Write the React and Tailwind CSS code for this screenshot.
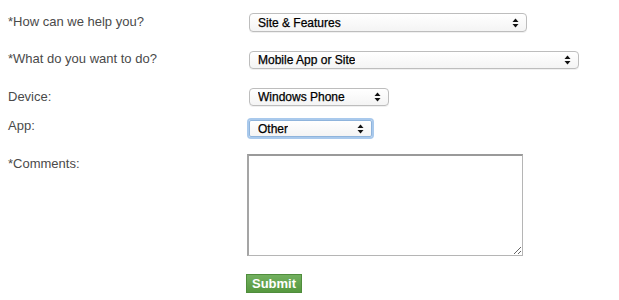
import { useState } from 'react';

const rows = [
  { label: '*How can we help you?', value: 'Site & Features', width: 'w-[278px]', height: 'h-[19px]', labelTop: 'mt-px', rowTop: 'mt-[13px]' },
  { label: '*What do you want to do?', value: 'Mobile App or Site', width: 'w-[330px]', height: 'h-[18px]', labelTop: 'mt-0', rowTop: 'mt-[19px]' },
  { label: 'Device:', value: 'Windows Phone', width: 'w-[140px]', height: 'h-[18px]', labelTop: 'mt-px', rowTop: 'mt-[19px]' },
  { label: 'App:', value: 'Other', width: 'w-[123px]', height: 'h-[17px]', labelTop: '-mt-[2px]', rowTop: 'mt-[14px]', focused: true },
];

function Arrows() {
  return (
    <svg width="7" height="10" viewBox="0 0 7 10" className="shrink-0">
      <path d="M3.5 0.5 L6.5 4 L0.5 4 Z" fill="#111" />
      <path d="M0.5 6 L6.5 6 L3.5 9.5 Z" fill="#111" />
    </svg>
  );
}

function MacSelect({ value, width, height, focused }) {
  return (
    <div
      className={`${width} ${height} flex items-center justify-between pl-[8px] pr-[7px] bg-gradient-to-b from-white to-[#f4f4f4] text-[12px] leading-none text-black [-webkit-text-stroke:0.25px_#000] ${
        focused
          ? 'rounded-[2px] border border-[#8fb4dc] shadow-[0_0_0_2px_#a9c9ec]'
          : 'rounded-[4px] border border-[#bdbdbd] shadow-[0_1px_0_rgba(0,0,0,0.06)]'
      }`}
      style={{ fontFamily: '"Liberation Sans", Arial, sans-serif' }}
    >
      <span className="truncate">{value}</span>
      <Arrows />
    </div>
  );
}

export default function App() {
  const [comments, setComments] = useState('');

  return (
    <div
      className="w-[619px] h-[300px] bg-white overflow-hidden pl-[8px]"
      style={{ fontFamily: '"Liberation Sans", Arial, sans-serif' }}
    >
      {rows.map((row) => (
        <div key={row.label} className={`flex items-start ${row.rowTop}`}>
          <label className={`w-[241px] shrink-0 text-[13px] leading-[16px] text-[#4a4a4a] ${row.labelTop}`}>
            {row.label}
          </label>
          <MacSelect {...row} />
        </div>
      ))}

      {/* Comments */}
      <div className="flex items-start mt-[17px]">
        <label className="w-[239px] shrink-0 mt-[2px] text-[13px] leading-[16px] text-[#4a4a4a]">
          *Comments:
        </label>
        <textarea
          value={comments}
          onChange={(e) => setComments(e.target.value)}
          className="w-[276px] h-[102px] border border-[#b5b5b5] border-t-[#9a9a9a] border-l-[#a5a5a5] border-t-2 border-l-2 bg-white outline-none resize"
        />
      </div>

      {/* Submit */}
      <div className="pl-[238px] mt-[15px]">
        <button
          type="button"
          className="w-[56px] h-[19px] bg-gradient-to-b from-[#72b05f] to-[#56983f] border border-[#4f8d3c] text-white text-[13px] font-bold leading-none"
        >
          Submit
        </button>
      </div>
    </div>
  );
}
